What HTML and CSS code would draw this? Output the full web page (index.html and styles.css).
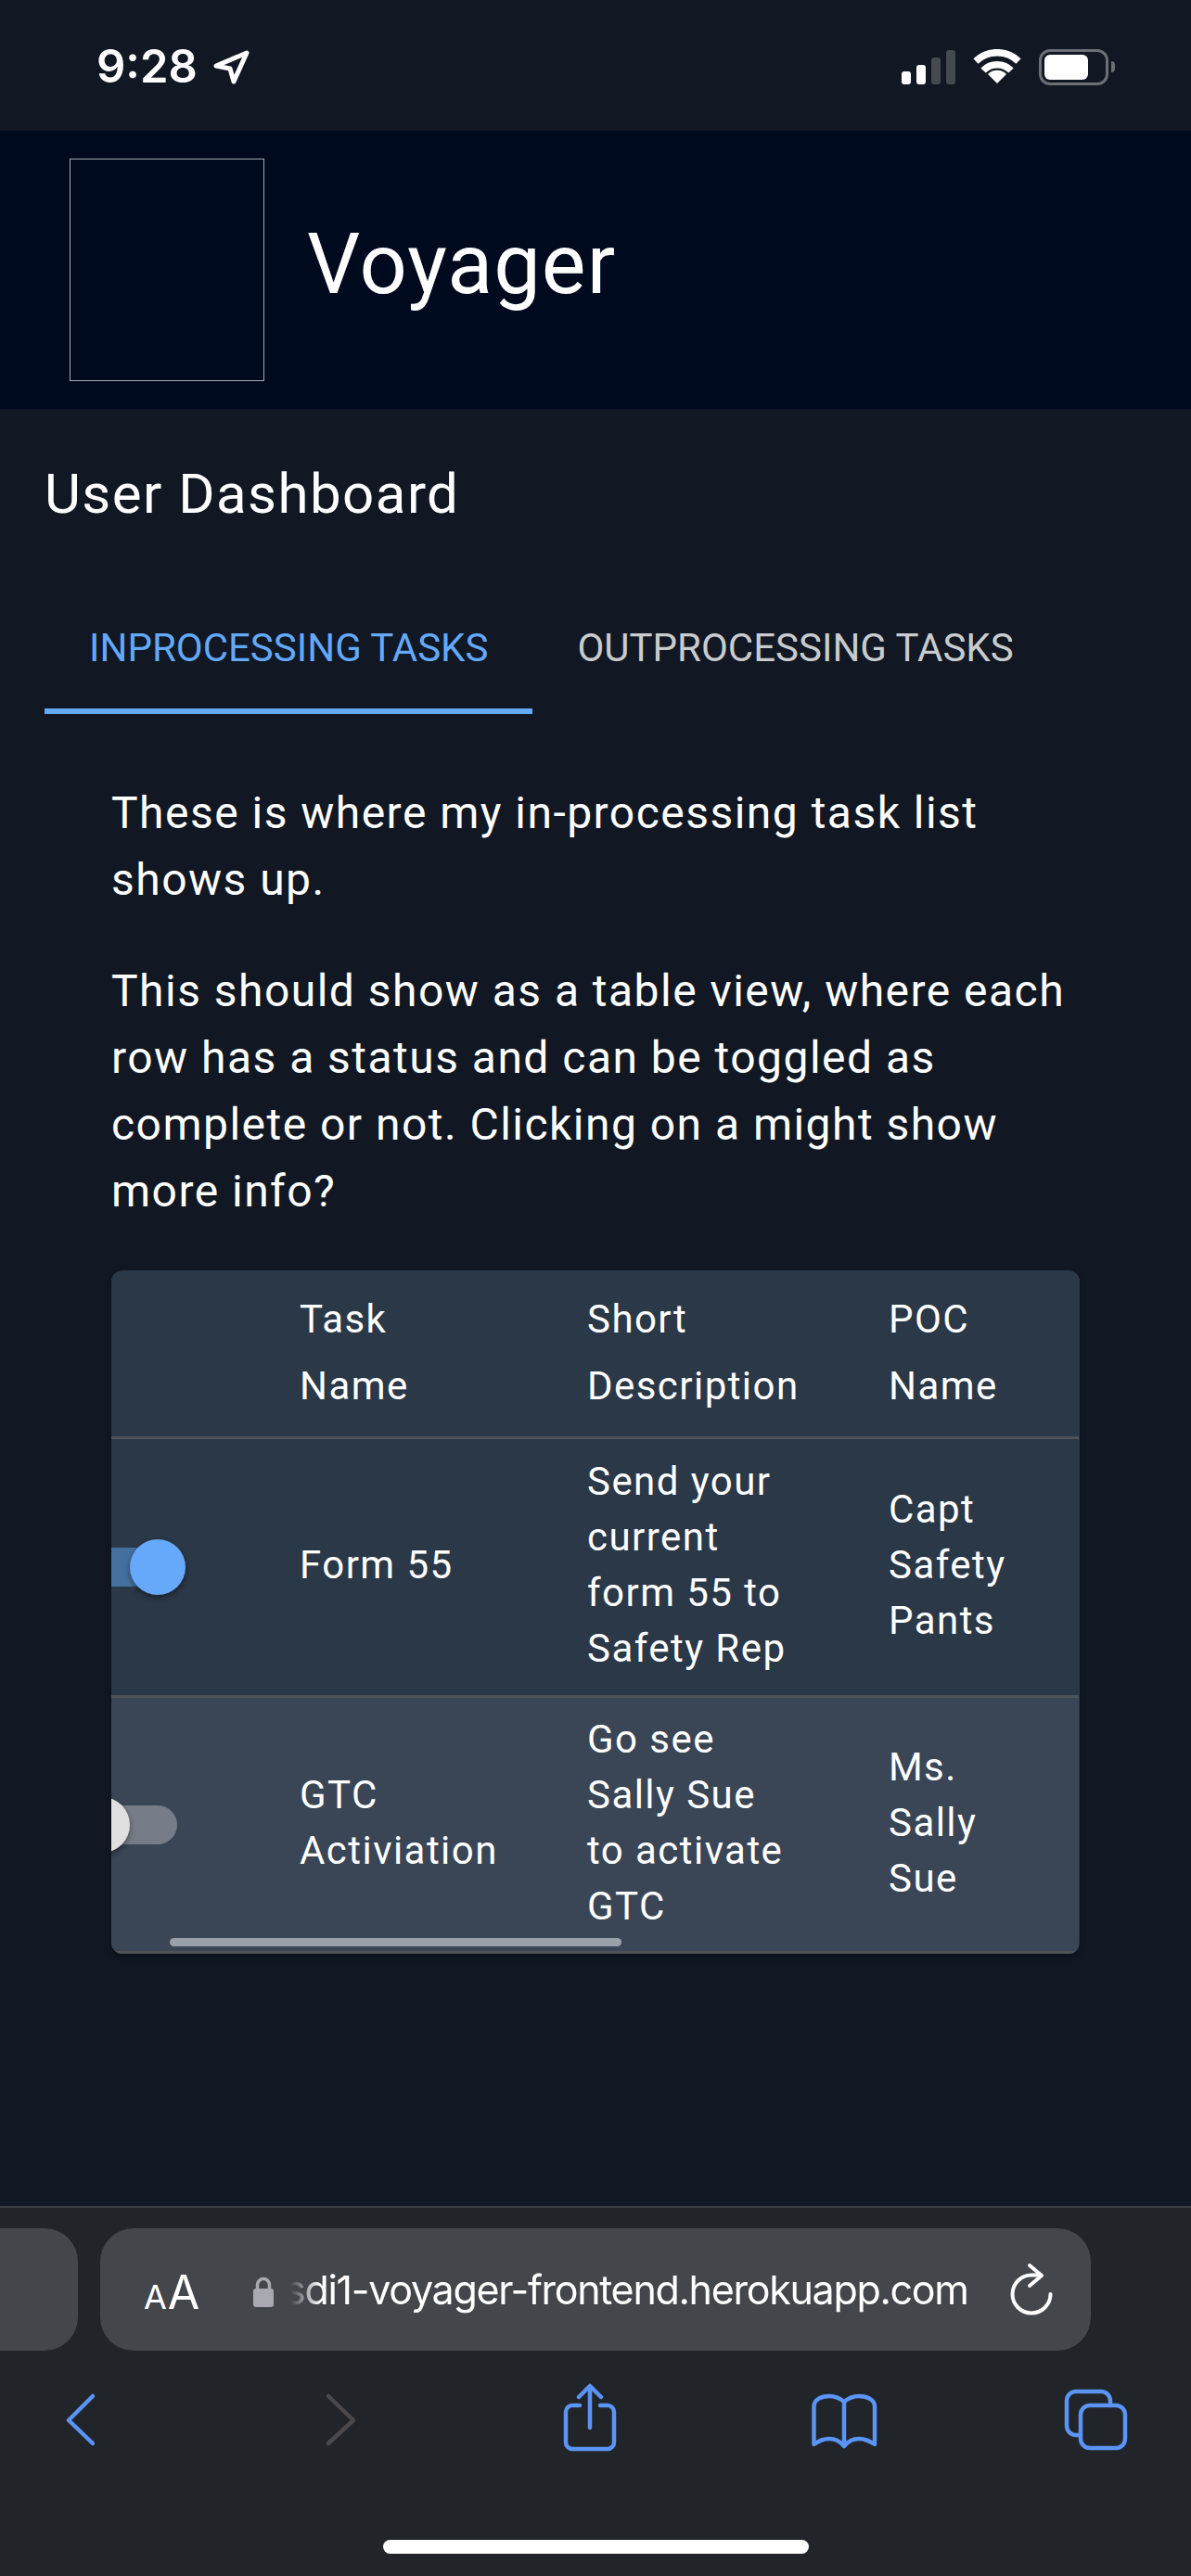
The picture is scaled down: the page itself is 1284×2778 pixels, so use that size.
FILE: index.html
```html
<!DOCTYPE html>
<html lang="en">
<head>
  <meta charset="UTF-8">
  <meta name="viewport" content="width=device-width, initial-scale=1.0">
  <title>Voyager</title>
  <link rel="stylesheet" href="styles.css">
</head>
<body>
  <div class="status-bar">
    <div class="clock">
      <span class="time">9:28</span>
      <svg class="loc" width="44" height="44" viewBox="0 0 44 44"><path d="M5 21 L38 7 L24 38 L20 24 Z"/></svg>
    </div>
    <div class="status-icons">
      <div class="signal">
        <i class="bar b1"></i><i class="bar b2"></i><i class="bar b3 off"></i><i class="bar b4 off"></i>
      </div>
      <svg class="wifi" width="52" height="38" viewBox="0 0 52 38">
        <path class="arc" d="M3 13 A33 33 0 0 1 49 13"/>
        <path class="arc" d="M11 23 A21 21 0 0 1 41 23"/>
        <path class="dot" d="M26 37 L16 27 A14 14 0 0 1 36 27 Z"/>
      </svg>
      <div class="battery"><div class="battery-fill"></div></div>
      <div class="battery-cap"></div>
    </div>
  </div>

  <header class="app-header">
    <div class="logo-box"></div>
    <h1>Voyager</h1>
  </header>

  <main class="content">
    <h2>User Dashboard</h2>

    <div class="tabs">
      <div class="tab active">Inprocessing Tasks</div>
      <div class="tab">Outprocessing Tasks</div>
    </div>

    <section class="tab-panel">
      <p>These is where my in-processing task list shows up.</p>
      <p>This should show as a table view, where each row has a status and can be toggled as complete or not. Clicking on a might show more info?</p>

      <div class="table-card">
        <div class="table-scroll">
          <table>
            <colgroup>
              <col class="col-switch"><col class="col-task"><col class="col-desc"><col class="col-poc">
            </colgroup>
            <thead>
              <tr>
                <th></th>
                <th>Task Name</th>
                <th>Short Description</th>
                <th>POC Name</th>
              </tr>
            </thead>
            <tbody>
              <tr>
                <td><span class="switch on"><i class="track"></i><i class="thumb"></i></span></td>
                <td>Form 55</td>
                <td>Send your current form 55 to Safety Rep</td>
                <td>Capt Safety Pants</td>
              </tr>
              <tr class="alt">
                <td><span class="switch"><i class="track"></i><i class="thumb"></i></span></td>
                <td>GTC Activiation</td>
                <td>Go see Sally Sue to activate GTC</td>
                <td>Ms. Sally Sue</td>
              </tr>
            </tbody>
          </table>
        </div>
        <div class="scroll-thumb"></div>
      </div>
    </section>
  </main>

  <footer class="browser-bar">
    <div class="url-row">
      <div class="tab-stub"></div>
      <div class="url-pill">
        <span class="aa"><span class="aa-small">A</span>A</span>
        <svg class="lock" width="24" height="34" viewBox="0 0 24 34">
          <path class="shackle" d="M5.500 15 V9 a6.500 6.500 0 0 1 13 0 V15"/>
          <rect x="1" y="13" width="22" height="20" rx="3"/>
        </svg>
        <span class="url-text">sdi1-voyager-frontend.herokuapp.com</span>
        <svg class="reload" width="50" height="60" viewBox="0 0 50 60">
          <path d="M44.500 34 A20.500 20.500 0 1 1 24 13.500 H33"/>
          <path d="M22 3 L35 14 L22 25"/>
        </svg>
      </div>
    </div>
    <nav class="nav-row">
      <svg class="nav-icon" viewBox="0 0 100 80"><path d="M63 14 L37 40 L63 65"/></svg>
      <svg class="nav-icon disabled" viewBox="0 0 100 80"><path d="M43 14 L70 40 L43 65"/></svg>
      <svg class="nav-icon" viewBox="0 0 100 80">
        <path d="M52 48 V4 M40 15 L52 3 L64 15"/>
        <path d="M41 24 H33 a7 7 0 0 0 -7 7 V64 a7 7 0 0 0 7 7 H71 a7 7 0 0 0 7 -7 V31 a7 7 0 0 0 -7 -7 H63"/>
      </svg>
      <svg class="nav-icon" viewBox="0 0 100 80">
        <path d="M52 20 C47 16 42 14 36 14 C27 14 19.500 18 19.500 25 V66 C25 62 31 60 36 60 C43 60 48 63 52 68 C56 63 61 60 68 60 C73 60 79 62 85 66 V25 C85 18 77 14 68 14 C62 14 57 16 52 20 V68"/>
      </svg>
      <svg class="nav-icon" viewBox="0 0 100 80">
        <rect x="34" y="24" width="48" height="46" rx="10"/>
        <path d="M66 24 V19 a10 10 0 0 0 -10 -10 H29 a10 10 0 0 0 -10 10 V46 a10 10 0 0 0 10 10 H34"/>
      </svg>
    </nav>
    <div class="home-indicator"></div>
  </footer>
</body>
</html>
```

FILE: styles.css
```css
body {
  margin: 0;
  width: 1284px;
  height: 2778px;
  display: flex;
  flex-direction: column;
  overflow: hidden;
  background-color: #111823;
  color: #fff;
  font-family: Roboto, "Liberation Sans", sans-serif;
}

/* status bar */
.status-bar {
  height: 141px;
  flex: none;
  display: flex;
  justify-content: space-between;
  align-items: center;
  box-sizing: border-box;
  padding: 3px 82px 0 104px;
}
.clock {
  display: flex;
  align-items: center;
  gap: 15px;
}
.time {
  font-family: Inter, sans-serif;
  font-weight: 600;
  font-size: 49px;
  line-height: 60px;
}
.loc path {
  fill: none;
  stroke: #fff;
  stroke-width: 5;
  stroke-linejoin: round;
}
.status-icons {
  display: flex;
  align-items: center;
}
.signal {
  display: flex;
  align-items: flex-end;
  gap: 6px;
  margin-right: 19px;
}
.bar {
  display: block;
  width: 10px;
  border-radius: 3px;
  background-color: #fff;
}
.bar.off { background-color: #454952; }
.b1 { height: 14px; }
.b2 { height: 21px; }
.b3 { height: 29px; }
.b4 { height: 37px; }
.wifi { margin-right: 19px; }
.wifi .arc {
  fill: none;
  stroke: #fff;
  stroke-width: 7.5;
}
.wifi .dot { fill: #fff; }
.battery {
  width: 75px;
  height: 39px;
  box-sizing: border-box;
  border: 3px solid #6c7076;
  border-radius: 12px;
  padding: 3px;
}
.battery-fill {
  width: 47px;
  height: 100%;
  border-radius: 6px;
  background-color: #fff;
}
.battery-cap {
  width: 4px;
  height: 12px;
  margin-left: 3px;
  border-radius: 0 4px 4px 0;
  background-color: #6c7076;
}

/* app header */
.app-header {
  height: 300px;
  flex: none;
  display: flex;
  align-items: center;
  gap: 46px;
  box-sizing: border-box;
  padding-left: 75px;
  background-color: #000a1e;
}
.logo-box {
  width: 210px;
  height: 240px;
  box-sizing: border-box;
  border: 1px solid #a6a9af;
}
h1 {
  margin: 0 0 10px;
  font-size: 90px;
  font-weight: 400;
  line-height: 1.2;
  letter-spacing: 1.1px;
}

/* page */
.content {
  flex: 1;
  padding: 44px 48px 0;
}
h2 {
  margin: 0;
  font-size: 60px;
  font-weight: 400;
  line-height: 96px;
  letter-spacing: 1.45px;
}
.tabs {
  display: flex;
  margin-top: 45px;
}
.tab {
  height: 144px;
  box-sizing: border-box;
  padding: 0 48px;
  display: flex;
  align-items: center;
  font-size: 42px;
  font-weight: 400;
  letter-spacing: 0;
  text-transform: uppercase;
  color: #c9cbce;
}
.tab.active {
  color: #63a9fa;
  box-shadow: inset 0 -6px 0 #63a9fa;
}
.tab-panel {
  padding: 71px 72px 0;
}
.tab-panel p {
  margin: 0 0 48px;
  font-size: 48px;
  line-height: 72px;
  letter-spacing: 1.47px;
}

/* table */
.table-card {
  position: relative;
  margin-top: 49px;
  border-radius: 12px;
  box-shadow: 0 3px 6px rgba(0, 0, 0, 0.3);
  overflow: hidden;
  background-color: #2b3847;
}
.table-scroll { overflow: hidden; }
table {
  table-layout: fixed;
  width: 1179px;
  margin-left: -136px;
  border-collapse: separate;
  border-spacing: 0;
  font-size: 42px;
  letter-spacing: 1.45px;
}
.col-switch { width: 291px; }
.col-task { width: 310px; }
.col-desc { width: 325px; }
.col-poc { width: 253px; }
th, td {
  text-align: left;
  font-weight: 400;
  border-bottom: 3px solid #4e5358;
}
th {
  padding: 17px 48px 18px;
  line-height: 72px;
}
td {
  padding: 16px 48px 20px;
  line-height: 60px;
}
.alt td {
  padding: 15px 48px 18px;
  background-color: #3a4655;
}
th:last-child, td:last-child, .alt td:last-child { padding-right: 70px; }
td:first-child, .alt td:first-child {
  padding: 0;
}
.switch {
  position: relative;
  display: block;
  width: 174px;
  height: 114px;
  margin-left: 69px;
}
.track {
  position: absolute;
  left: 36px;
  top: 36px;
  width: 102px;
  height: 42px;
  border-radius: 21px;
  background-color: #767d88;
}
.thumb {
  position: absolute;
  left: 27px;
  top: 27px;
  width: 60px;
  height: 60px;
  border-radius: 50%;
  background-color: #e0e0e0;
  box-shadow: 0 3px 6px rgba(0, 0, 0, 0.4);
}
.switch.on .track { background-color: #44709f; }
.switch.on .thumb {
  left: 87px;
  background-color: #66a9fb;
}
.scroll-thumb {
  position: absolute;
  left: 63px;
  bottom: 8px;
  width: 487px;
  height: 9px;
  border-radius: 5px;
  background-color: #9aa1ab;
}

/* safari bottom bar */
.browser-bar {
  height: 399px;
  flex: none;
  box-sizing: border-box;
  border-top: 2px solid #3a3d42;
  background-color: #212429;
  display: flex;
  flex-direction: column;
  padding-top: 22px;
}
.url-row {
  display: flex;
  gap: 24px;
}
.tab-stub {
  width: 84px;
  height: 132px;
  border-radius: 0 36px 36px 0;
  background-color: #43464b;
}
.url-pill {
  width: 1068px;
  height: 132px;
  box-sizing: border-box;
  border-radius: 36px;
  background-color: #43464b;
  display: flex;
  align-items: center;
  padding-left: 47px;
  font-family: Inter, sans-serif;
}
.aa {
  width: 60px;
  font-size: 50px;
  line-height: 1;
  margin-top: 6px;
  white-space: nowrap;
}
.aa-small {
  font-size: 36px;
  margin-right: 1px;
}
.lock {
  margin-left: 57px;
  margin-top: 5px;
}
.lock rect { fill: #a9a9b1; }
.lock .shackle {
  fill: none;
  stroke: #a9a9b1;
  stroke-width: 3.5;
}
.url-text {
  width: 745px;
  margin-left: 11px;
  font-size: 43px;
  letter-spacing: -1.3px;
  white-space: nowrap;
  -webkit-mask-image: linear-gradient(to right, transparent 6px, #000 38px);
  mask-image: linear-gradient(to right, transparent 6px, #000 38px);
}
.reload {
  margin-left: 36px;
  margin-top: 2px;
}
.reload path {
  fill: none;
  stroke: #fff;
  stroke-width: 4;
  stroke-linecap: round;
  stroke-linejoin: round;
}
.nav-row {
  display: flex;
  justify-content: space-between;
  padding: 0 53px 0 37px;
  margin-top: 35px;
}
.nav-icon {
  width: 100px;
  height: 80px;
  fill: none;
  stroke: #5a94f4;
  stroke-width: 4.5;
  stroke-linecap: round;
  stroke-linejoin: round;
}
.nav-icon.disabled { stroke: #49494c; }
.home-indicator {
  width: 459px;
  height: 15px;
  margin: 89px auto 0;
  border-radius: 8px;
  background-color: #fff;
}
```
